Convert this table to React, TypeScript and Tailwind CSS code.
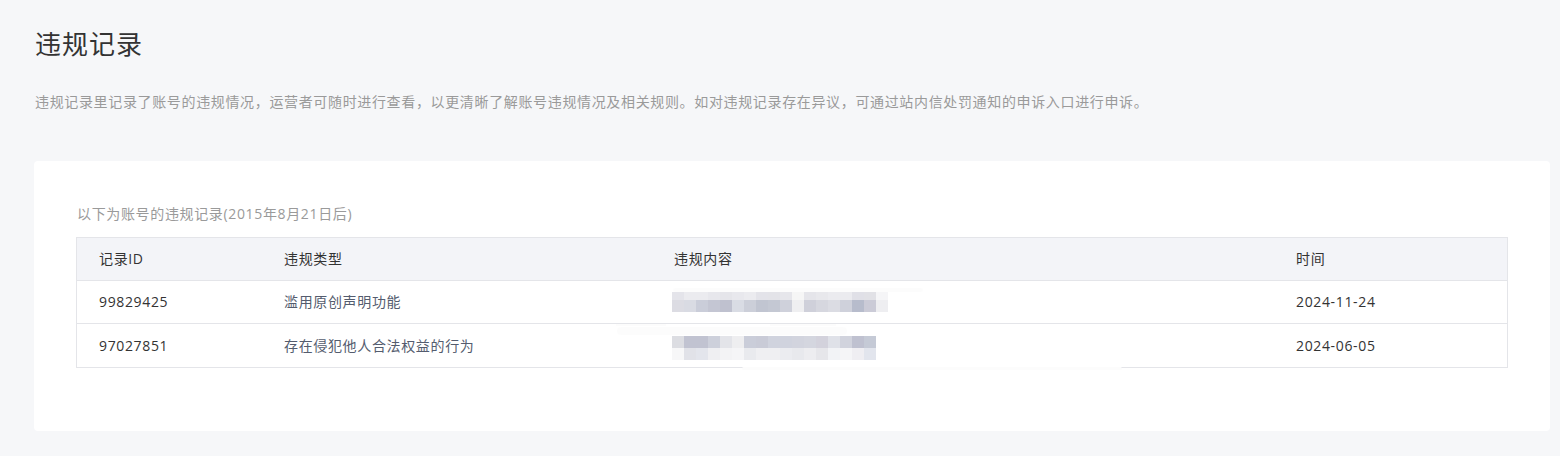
const FONT = "font-['Open_Sans','Noto_Sans_CJK_SC',sans-serif]";

const ROWS = [
  {
    id: "99829425",
    type: "滥用原创声明功能",
    date: "2024-11-24",
    top: [
      "bg-[#e4e4ea]", "bg-[#ebebef]", "bg-[#ebebef]", "bg-[#e7e7ec]", "bg-[#e5e5ea]", "bg-[#e8e8ed]",
      "bg-[#ebebef]", "bg-[#e3e3e9]", "bg-[#e3e3e8]", "bg-[#e6e6eb]", "bg-[#f6f6f6]", "bg-[#e5e5ea]",
      "bg-[#e8e8ec]", "bg-[#ebebef]", "bg-[#ebebef]", "bg-[#e0e0e7]", "bg-[#e1e1e6]", "bg-[#f5f5f7]",
    ],
    bottom: [
      "bg-[#dcdce3]", "bg-[#d9dbe3]", "bg-[#cacdd9]", "bg-[#c4c6d3]", "bg-[#bfc1cf]", "bg-[#d9dce4]",
      "bg-[#cccfd9]", "bg-[#c1c5d1]", "bg-[#c4c8d3]", "bg-[#cfd1db]", "bg-[#efeff1]", "bg-[#cfd0da]",
      "bg-[#d6d7df]", "bg-[#dbdce3]", "bg-[#cfd1db]", "bg-[#b7bccc]", "bg-[#cbcbd7]", "bg-[#eeeef1]",
    ],
    topH: "h-[8px]",
    shift: "mt-0",
  },
  {
    id: "97027851",
    type: "存在侵犯他人合法权益的行为",
    date: "2024-06-05",
    top: [
      "bg-[#dcdde2]", "bg-[#c1c3d1]", "bg-[#c1c3d1]", "bg-[#cdd0db]", "bg-[#e3e4e9]", "bg-[#eeeef0]",
      "bg-[#cacdd9]", "bg-[#c9cbd7]", "bg-[#d0d3de]", "bg-[#d0d3de]", "bg-[#d2d4de]", "bg-[#d4d6df]",
      "bg-[#d3d2dc]", "bg-[#dfe1e8]", "bg-[#d1d3dd]", "bg-[#bfc1d0]", "bg-[#c5cad6]",
    ],
    bottom: [
      "bg-[#f7f7f8]", "bg-[#e1e2e8]", "bg-[#e3e5ec]", "bg-[#efeff2]", "bg-[#f3f3f5]", "bg-[#f5f5f7]",
      "bg-[#e9eaee]", "bg-[#efeff2]", "bg-[#efeff2]", "bg-[#ebecf0]", "bg-[#e8e9ed]", "bg-[#ededf0]",
      "bg-[#e6e6ea]", "bg-[#f2f3f6]", "bg-[#f5f5f7]", "bg-[#efeef2]", "bg-[#e2e5ed]",
    ],
    topH: "h-[12px]",
    shift: "mt-[4px]",
  },
];

const COLS = "grid grid-cols-[185px_390px_622px_1fr]";

export default function App() {
  return (
    <main className={`${FONT} min-h-[456px] bg-[#f6f7f9] pl-[34px] pr-[10px] pt-[26px] pb-[25px] tracking-[0.65px]`}>
      <h1 className="h-[36px] pl-px text-[26px] leading-[36px] tracking-[1px] text-[#333333]">违规记录</h1>
      <p className="mt-[30px] pl-px text-[14px] leading-[20px] text-[#9a9a9a]">
        违规记录里记录了账号的违规情况，运营者可随时进行查看，以更清晰了解账号违规情况及相关规则。如对违规记录存在异议，可通过站内信处罚通知的申诉入口进行申诉。
      </p>

      <section className="mt-[49px] h-[270px] rounded bg-white px-[42px] pt-[43px]">
        <p className="pl-px text-[14px] leading-[20px] text-[#9a9a9a]">以下为账号的违规记录(2015年8月21日后)</p>

        <div className="relative mt-[13px] border border-[#e4e5e9] text-[14px] leading-[20px]">
          <div className={`${COLS} h-[43px] items-center border-b border-[#e4e5e9] bg-[#f3f4f8] text-[#333333]`}>
            <span className="pl-[22px]">记录ID</span>
            <span className="pl-[22px]">违规类型</span>
            <span className="pl-[22px]">违规内容</span>
            <span className="pl-[22px]">时间</span>
          </div>
          {ROWS.map((r, i) => (
            <div
              key={r.id}
              className={`${COLS} h-[43px] items-center ${i === 0 ? "border-b border-[#e4e5e9]" : ""}`}
            >
              <span className="pl-[22px] text-[#333333]">{r.id}</span>
              <span className="pl-[22px] text-[#545c6e]">{r.type}</span>
              <div className={`pl-[20px] ${r.shift}`}>
                <div className={`flex ${r.topH}`}>
                  {r.top.map((c, j) => (
                    <div key={j} className={`w-[12px] ${c}`} />
                  ))}
                </div>
                <div className="flex h-[12px]">
                  {r.bottom.map((c, j) => (
                    <div key={j} className={`w-[12px] ${c}`} />
                  ))}
                </div>
              </div>
              <span className="pl-[22px] text-[#333333]">{r.date}</span>
            </div>
          ))}

          {/* erased strokes over the blurred column */}
          <div className="absolute left-[539px] top-[86px] h-[2px] w-[50px] bg-[#fcfcfc]" />
          <div className="absolute left-[693px] top-[86px] h-[2px] w-[66px] bg-[#fcfcfc]" />
          <div className="absolute left-[665px] top-[129px] h-[3px] w-[380px] rounded-full bg-[#fcfcfc]" />
          <div className="absolute left-[596px] top-[50px] h-[4px] w-[250px] rounded-full bg-[#fbfbfb] opacity-70" />
          <div className="absolute left-[540px] top-[89px] h-[8px] w-[230px] rounded-full bg-[#fbfbfb] opacity-70" />
        </div>
      </section>
    </main>
  );
}
